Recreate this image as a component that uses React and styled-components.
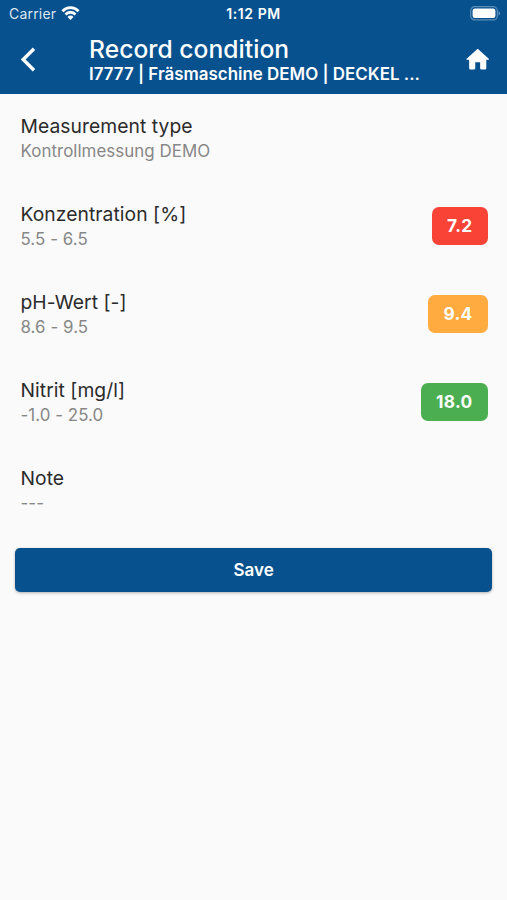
import React from 'react'
import styled, { createGlobalStyle } from 'styled-components'

const measurements = [
  { label: 'Measurement type', value: 'Kontrollmessung DEMO' },
  { label: 'Konzentration [%]', value: '5.5 - 6.5', result: '7.2', color: '#f94337' },
  { label: 'pH-Wert [-]', value: '8.6 - 9.5', result: '9.4', color: '#ffab40' },
  { label: 'Nitrit [mg/l]', value: '-1.0 - 25.0', result: '18.0', color: '#4bae50' },
  { label: 'Note', value: '---' },
]

function StatusBar() {
  return (
    <StatusContainer>
      <div className='carrier'>
        <span>Carrier</span>
        <svg width="19" height="14" viewBox="0 0 20 14" preserveAspectRatio="none" fill="none" stroke="#fff" strokeWidth="2.9">
          <path d="M1.5 5.2a12 12 0 0 1 17 0" />
          <path d="M4.7 8.5a7.5 7.5 0 0 1 10.6 0" />
          <path d="M10 14 6.9 10.9a4.4 4.4 0 0 1 6.2 0z" fill="#fff" stroke="none" />
        </svg>
      </div>
      <div className='time'>1:12 PM</div>
      <div className='battery'>
        <svg width="31" height="15" viewBox="0 0 31 15">
          <rect x="0.7" y="0.7" width="26.6" height="13.2" rx="4" fill="none" stroke="#fff" strokeOpacity="0.35" strokeWidth="1.2" />
          <rect x="2.6" y="2.6" width="22.8" height="9.4" rx="2.2" fill="#fff" />
          <path d="M28.6 5v4.6a2.5 2.5 0 0 0 0-4.6z" fill="#fff" fillOpacity="0.4" />
        </svg>
      </div>
    </StatusContainer>
  )
}

function Header() {
  return (
    <HeaderContainer>
      <IconButton className='back' aria-label="Back">
        <svg width="16" height="25" viewBox="0 0 16 25" fill="none" stroke="#fff" strokeWidth="3.4">
          <path d="M14 1.8 3.2 12.5 14 23.2" />
        </svg>
      </IconButton>
      <Titles>
        <h1>Record condition</h1>
        <p>I7777 | Fräsmaschine DEMO | DECKEL ...</p>
      </Titles>
      <IconButton aria-label="Home">
        <svg width="29.4" height="29.4" viewBox="0 0 24 24" fill="#fff">
          <path d="M10 19v-5h4v5c0 .55.45 1 1 1h3c.55 0 1-.45 1-1v-7h1.7c.46 0 .68-.57.33-.87L12.67 3.6c-.38-.34-.96-.34-1.34 0l-8.36 7.53c-.34.3-.13.87.33.87H5v7c0 .55.45 1 1 1h3c.55 0 1-.45 1-1z" />
        </svg>
      </IconButton>
    </HeaderContainer>
  )
}

function App() {
  return (
    <>
      <GlobalStyle />
      <Page>
        <TopBar>
          <StatusBar />
          <Header />
        </TopBar>
        <List>
          {measurements.map((item) => (
            <Row key={item.label}>
              <div>
                <Label>{item.label}</Label>
                <Value>{item.value}</Value>
              </div>
              {item.result && <Badge $color={item.color}>{item.result}</Badge>}
            </Row>
          ))}
        </List>
        <SaveButton>Save</SaveButton>
      </Page>
    </>
  )
}

export default App

const GlobalStyle = createGlobalStyle`
  * {
    box-sizing: border-box;
  }

  body {
    margin: 0;
    background: #fafafa;
    font-family: Inter, 'Liberation Sans', sans-serif;
  }

  h1, p {
    margin: 0;
  }
`

const Page = styled.div`
  display: flex;
  flex-direction: column;
  height: 900px;
  background: #fafafa;
`

const TopBar = styled.header`
  height: 94px;
  background: #07518f;
  color: #fff;
`

const StatusContainer = styled.div`
  display: grid;
  grid-template-columns: 1fr auto 1fr;
  align-items: center;
  height: 26px;
  padding: 1px 6px 0 9px;
  font-size: 14px;

  .carrier {
    display: flex;
    align-items: center;
    gap: 5px;
    letter-spacing: 0.2px;
    color: #dbe6f0;
  }

  .carrier svg {
    margin-bottom: 2px;
  }

  .time {
    margin-right: 3px;
    font-weight: 600;
    font-size: 14px;
    letter-spacing: 0.6px;
  }

  .battery {
    display: flex;
    justify-content: flex-end;
  }
`

const HeaderContainer = styled.div`
  display: flex;
  align-items: center;
  height: 68px;
`

const IconButton = styled.button`
  display: flex;
  align-items: center;
  justify-content: center;
  width: 59px;
  height: 59px;
  padding: 0;
  border: none;
  background: none;

  &.back {
    padding: 0 4px 1px 0;
  }
`

const Titles = styled.div`
  flex: 1;
  padding-left: 30px;
  white-space: nowrap;

  h1 {
    padding-bottom: 2px;
    font-size: 24.6px;
    font-weight: 500;
    line-height: 26px;
    letter-spacing: 0.05px;
  }

  p {
    font-size: 16.95px;
    font-weight: 600;
    line-height: 20px;
  }
`

const List = styled.main`
  padding: 0 19.5px 0 20.5px;
`

const Row = styled.div`
  display: flex;
  align-items: center;
  justify-content: space-between;
  height: 88px;
`

const Label = styled.div`
  padding-top: 1px;
  font-size: 19.3px;
  line-height: 25px;
  letter-spacing: 0.05px;
  color: #2b2b2b;
`

const Value = styled.div`
  font-size: 16.9px;
  line-height: 24px;
  letter-spacing: 0.05px;
  color: #878787;
`

const Badge = styled.div`
  padding: 0 15px;
  border-radius: 7px;
  background: ${(props) => props.$color};
  color: #fff;
  font-size: 17.3px;
  font-weight: 700;
  line-height: 38px;
  letter-spacing: 0.3px;
`

const SaveButton = styled.button`
  height: 44px;
  margin: 14px 15px 0 15.4px;
  border: none;
  border-radius: 5px;
  background: #07518f;
  box-shadow: 0 1px 3px rgba(0, 0, 0, 0.3);
  color: #fff;
  font-family: inherit;
  font-size: 17px;
  font-weight: 600;
`
